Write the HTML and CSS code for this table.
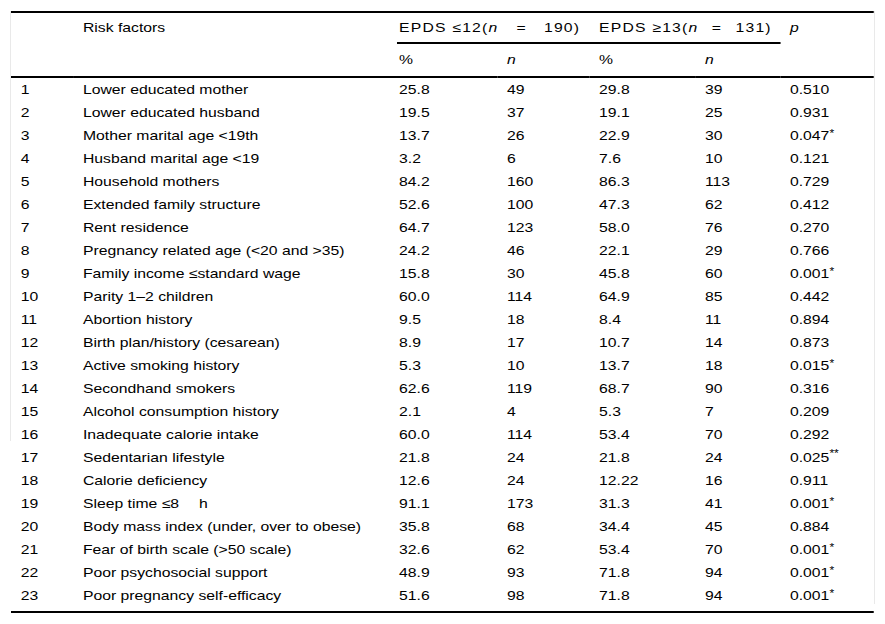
FILE: index.html
```html
<!DOCTYPE html>
<html lang="en">
<head>
<meta charset="utf-8">
<title>Risk factors</title>
<link rel="stylesheet" href="styles.css">
</head>
<body>
<div class="sheet">
<table class="risk">
<colgroup>
<col class="c-num"><col class="c-name"><col class="c-p1"><col class="c-n1"><col class="c-p2"><col class="c-n2"><col class="c-p">
</colgroup>
<thead>
<tr class="h1">
<th></th>
<th>Risk factors</th>
<th colspan="4" class="groups">
<div class="group-row">
<span class="group group-a">EPDS ≤12(<i>n</i><span class="eq">=</span>190)</span>
<span class="group group-b">EPDS ≥13(<i>n</i><span class="eq">=</span>131)</span>
</div>
</th>
<th><i>p</i></th>
</tr>
<tr class="h2">
<th></th><th></th><th class="first-stat">%</th><th><i>n</i></th><th>%</th><th><i>n</i></th><th></th>
</tr>
</thead>
<tbody>
<tr><td>1</td><td>Lower educated mother</td><td>25.8</td><td>49</td><td>29.8</td><td>39</td><td>0.510</td></tr>
<tr><td>2</td><td>Lower educated husband</td><td>19.5</td><td>37</td><td>19.1</td><td>25</td><td>0.931</td></tr>
<tr><td>3</td><td>Mother marital age &lt;19th</td><td>13.7</td><td>26</td><td>22.9</td><td>30</td><td>0.047<sup>*</sup></td></tr>
<tr><td>4</td><td>Husband marital age &lt;19</td><td>3.2</td><td>6</td><td>7.6</td><td>10</td><td>0.121</td></tr>
<tr><td>5</td><td>Household mothers</td><td>84.2</td><td>160</td><td>86.3</td><td>113</td><td>0.729</td></tr>
<tr><td>6</td><td>Extended family structure</td><td>52.6</td><td>100</td><td>47.3</td><td>62</td><td>0.412</td></tr>
<tr><td>7</td><td>Rent residence</td><td>64.7</td><td>123</td><td>58.0</td><td>76</td><td>0.270</td></tr>
<tr><td>8</td><td>Pregnancy related age (&lt;20 and &gt;35)</td><td>24.2</td><td>46</td><td>22.1</td><td>29</td><td>0.766</td></tr>
<tr><td>9</td><td>Family income ≤standard wage</td><td>15.8</td><td>30</td><td>45.8</td><td>60</td><td>0.001<sup>*</sup></td></tr>
<tr><td>10</td><td>Parity 1–2 children</td><td>60.0</td><td>114</td><td>64.9</td><td>85</td><td>0.442</td></tr>
<tr><td>11</td><td>Abortion history</td><td>9.5</td><td>18</td><td>8.4</td><td>11</td><td>0.894</td></tr>
<tr><td>12</td><td>Birth plan/history (cesarean)</td><td>8.9</td><td>17</td><td>10.7</td><td>14</td><td>0.873</td></tr>
<tr><td>13</td><td>Active smoking history</td><td>5.3</td><td>10</td><td>13.7</td><td>18</td><td>0.015<sup>*</sup></td></tr>
<tr><td>14</td><td>Secondhand smokers</td><td>62.6</td><td>119</td><td>68.7</td><td>90</td><td>0.316</td></tr>
<tr><td>15</td><td>Alcohol consumption history</td><td>2.1</td><td>4</td><td>5.3</td><td>7</td><td>0.209</td></tr>
<tr><td>16</td><td>Inadequate calorie intake</td><td>60.0</td><td>114</td><td>53.4</td><td>70</td><td>0.292</td></tr>
<tr><td>17</td><td>Sedentarian lifestyle</td><td>21.8</td><td>24</td><td>21.8</td><td>24</td><td>0.025<sup class="dbl">**</sup></td></tr>
<tr><td>18</td><td>Calorie deficiency</td><td>12.6</td><td>24</td><td>12.22</td><td>16</td><td>0.911</td></tr>
<tr><td>19</td><td>Sleep time ≤8<span class="gap">h</span></td><td>91.1</td><td>173</td><td>31.3</td><td>41</td><td>0.001<sup>*</sup></td></tr>
<tr><td>20</td><td>Body mass index (under, over to obese)</td><td>35.8</td><td>68</td><td>34.4</td><td>45</td><td>0.884</td></tr>
<tr><td>21</td><td>Fear of birth scale (&gt;50 scale)</td><td>32.6</td><td>62</td><td>53.4</td><td>70</td><td>0.001<sup>*</sup></td></tr>
<tr><td>22</td><td>Poor psychosocial support</td><td>48.9</td><td>93</td><td>71.8</td><td>94</td><td>0.001<sup>*</sup></td></tr>
<tr><td>23</td><td>Poor pregnancy self-efficacy</td><td>51.6</td><td>98</td><td>71.8</td><td>94</td><td>0.001<sup>*</sup></td></tr>
</tbody>
</table>
</div>
</body>
</html>
```
FILE: styles.css
```css
html, body {
  margin: 0;
  padding: 0;
}
body {
  font-family: "Liberation Sans", Arial, Helvetica, sans-serif;
  color: #000;
  background:
    linear-gradient(#e9e9e9, #e9e9e9) no-repeat 10px 11px / 1px 430px,
    linear-gradient(#e9e9e9, #e9e9e9) no-repeat 874px 11px / 1px 593px,
    #fff;
  min-height: 624px;
}
.sheet {
  width: 713px;
  margin: 11px 0 0 11px;
  transform: scaleX(1.21);
  transform-origin: 0 0;
}
.risk {
  width: 713px;
  table-layout: fixed;
  border-collapse: separate;
  border-spacing: 0;
  border-top: 2px solid #000;
  border-bottom: 2px solid #000;
  font-size: 13px;
}
.c-num { width: 51.5px; }
.c-name { width: 267.5px; }
.c-p1 { width: 82.9px; }
.c-n1 { width: 76.1px; }
.c-p2 { width: 87.6px; }
.c-n2 { width: 70.2px; }
.c-p { width: 77.2px; }
.risk th,
.risk td {
  padding: 0 0 0 8px;
  text-align: left;
  font-weight: normal;
  white-space: nowrap;
  vertical-align: top;
}
.risk td {
  line-height: 23px;
}
.risk td:nth-child(3),
.risk th.groups,
.risk th.first-stat {
  padding-left: 1.7px;
}
.h1 th {
  line-height: 29px;
}
.h1 th.groups {
  border-bottom: 2px solid #000;
}
.group-row {
  display: flex;
}
.group {
  letter-spacing: 1px;
}
.group-a {
  width: 157.3px;
  flex: none;
}
.group-b {
  padding-left: 8px;
}
.group-a .eq {
  margin: 0 14px 0 15px;
}
.group-b .eq {
  margin: 0 11px 0 11px;
}
.h2 th {
  line-height: 31px;
  padding-bottom: 1px;
  border-bottom: 2px solid #000;
}
.gap {
  margin-left: 16.5px;
}
.risk tbody tr:last-child td {
  padding-bottom: 4px;
}
sup {
  font-size: 10px;
  line-height: 0;
  vertical-align: 3px;
}
sup.dbl {
  vertical-align: 5px;
}
```
